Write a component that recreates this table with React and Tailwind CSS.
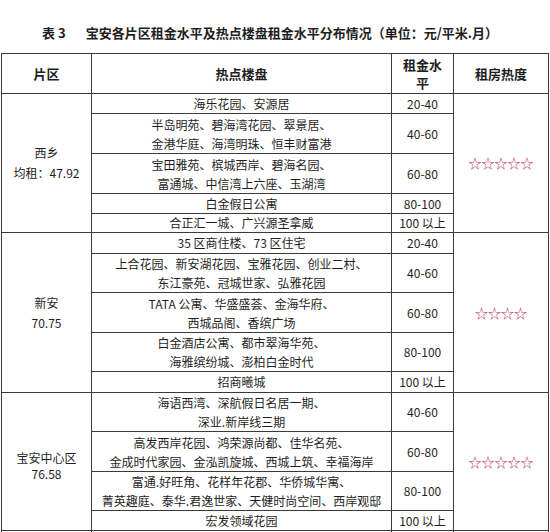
import React from "react";

const groups = [
  {
    name: ["西乡", "均租：47.92"],
    stars: "☆☆☆☆☆",
    nameClass: "leading-[20px]",
    rows: [
      { h: "h-[20px]", lines: ["海乐花园、安源居"], price: "20-40" },
      { h: "h-[40px]", lines: ["半岛明苑、碧海湾花园、翠景居、", "金港华庭、海湾明珠、恒丰财富港"], price: "40-60" },
      { h: "h-[40px]", lines: ["宝田雅苑、槟城西岸、碧海名园、", "富通城、中信湾上六座、玉湖湾"], price: "60-80" },
      { h: "h-[20px]", lines: ["白金假日公寓"], price: "80-100" },
      { h: "h-[19px]", lines: ["合正汇一城、广兴源圣拿威"], price: "100 以上" },
    ],
  },
  {
    name: ["新安", "70.75"],
    stars: "☆☆☆☆",
    nameClass: "leading-[20px]",
    rows: [
      { h: "h-[21px]", lines: ["35 区商住楼、73 区住宅"], price: "20-40" },
      { h: "h-[39px]", lines: ["上合花园、新安湖花园、宝雅花园、创业二村、", "东江豪苑、冠城世家、弘雅花园"], price: "40-60" },
      { h: "h-[40px]", lines: ["TATA 公寓、华盛盛荟、金海华府、", "西城品阁、香缤广场"], price: "60-80" },
      { h: "h-[39px]", lines: ["白金酒店公寓、都市翠海华苑、", "海雅缤纷城、澎柏白金时代"], price: "80-100" },
      { h: "h-[21px]", lines: ["招商曦城"], price: "100 以上" },
    ],
  },
  {
    name: ["宝安中心区", "76.58"],
    stars: "☆☆☆☆☆",
    nameClass: "leading-[16px] pt-[8px]",
    rows: [
      { h: "h-[39px]", lines: ["海语西湾、深航假日名居一期、", "深业.新岸线三期"], price: "40-60" },
      { h: "h-[40px]", lines: ["高发西岸花园、鸿荣源尚都、佳华名苑、", "金成时代家园、金泓凯旋城、西城上筑、幸福海岸"], price: "60-80" },
      { h: "h-[39px]", lines: ["富通.好旺角、花样年花郡、华侨城华寓、", "菁英趣庭、泰华.君逸世家、天健时尚空间、西岸观邸"], price: "80-100" },
      { h: "h-[20px]", lines: ["宏发领域花园"], price: "100 以上" },
    ],
  },
];

const cell = "border border-[#3a3a3a] p-0 align-middle text-center";

export default function App() {
  return (
    <div
      className="w-[550px] h-[532px] overflow-hidden bg-white text-[#1e1e1e]"
      style={{ fontFamily: '"Noto Sans CJK SC", "Noto Sans", sans-serif' }}
    >
      <div className="h-[53px] pt-[23px] pl-[42px] text-[13px] leading-[20px] font-bold whitespace-nowrap">
        <span>表 3</span>
        <span className="ml-[20px]">宝安各片区租金水平及热点楼盘租金水平分布情况（单位：元/平米.月）</span>
      </div>
      <table className="ml-[1px] table-fixed border-collapse text-[12px] leading-[18px]">
        <colgroup>
          <col className="w-[90px]" />
          <col className="w-[300px]" />
          <col className="w-[62px]" />
          <col className="w-[95px]" />
        </colgroup>
        <thead>
          <tr className="h-[40px] text-[13px] font-bold">
            <th className={`${cell} leading-[18px]`}>片区</th>
            <th className={`${cell} leading-[18px]`}>热点楼盘</th>
            <th className={`${cell} leading-[18px]`}>
              租金水
              <br />平
            </th>
            <th className={`${cell} leading-[18px]`}>租房热度</th>
          </tr>
        </thead>
        <tbody>
          {groups.map((g) =>
            g.rows.map((r, i) => (
              <tr key={g.name[0] + i} className={r.h}>
                {i === 0 && (
                  <td rowSpan={g.rows.length} className={`${cell} ${g.nameClass}`}>
                    <div>{g.name[0]}</div>
                    <div>{g.name[1]}</div>
                  </td>
                )}
                <td className={`${cell} ${r.lines.length > 1 ? "leading-[19px]" : "leading-[18px]"}`}>
                  {r.lines.map((l) => (
                    <div key={l} className="whitespace-nowrap">{l}</div>
                  ))}
                </td>
                <td className={`${cell} whitespace-nowrap`}>{r.price}</td>
                {i === 0 && (
                  <td rowSpan={g.rows.length} className={`${cell} text-[13px] text-[#c23a5c]`}>
                    {g.stars}
                  </td>
                )}
              </tr>
            ))
          )}
          <tr className="h-[20px]">
            <td className={cell}></td>
            <td className={cell}></td>
            <td className={cell}></td>
            <td className={cell}></td>
          </tr>
        </tbody>
      </table>
    </div>
  );
}
